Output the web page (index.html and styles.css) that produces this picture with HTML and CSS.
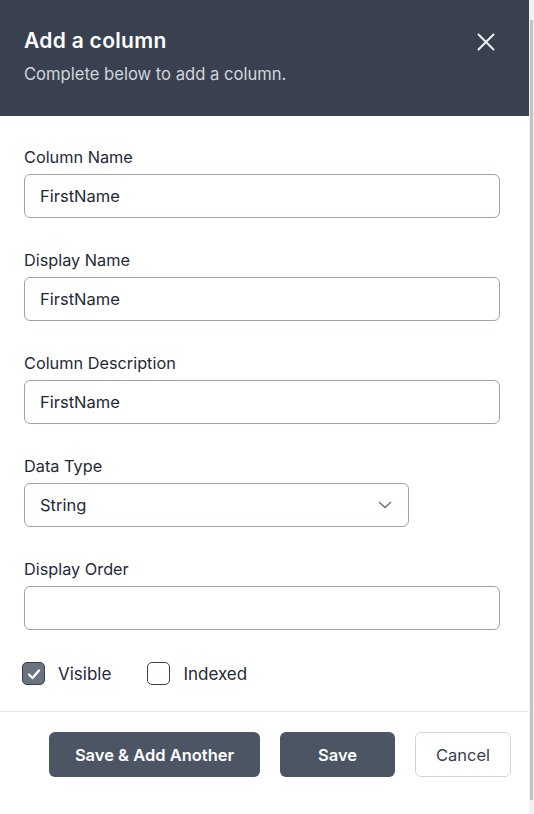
FILE: index.html
```html
<!DOCTYPE html>
<html lang="en">
<head>
<meta charset="utf-8">
<title>Add a column</title>
<link rel="stylesheet" href="styles.css">
</head>
<body>
<div class="shell">
  <div class="panel">
    <header class="head">
      <div class="head-text">
        <h1 class="title">Add a column</h1>
        <p class="subtitle">Complete below to add a column.</p>
      </div>
      <button class="close" aria-label="Close">
        <svg width="18" height="18" viewBox="0 0 18 18"><path d="M1.5 1.5 L16.5 16.5 M16.5 1.5 L1.5 16.5" stroke="#eef0f3" stroke-width="2" stroke-linecap="round" fill="none"/></svg>
      </button>
    </header>
    <form class="form">
      <div class="field">
        <label class="label">Column Name</label>
        <div class="input">FirstName</div>
      </div>
      <div class="field">
        <label class="label">Display Name</label>
        <div class="input">FirstName</div>
      </div>
      <div class="field">
        <label class="label">Column Description</label>
        <div class="input">FirstName</div>
      </div>
      <div class="field">
        <label class="label">Data Type</label>
        <div class="input select">
          <span>String</span>
          <svg class="chev" width="14" height="8" viewBox="0 0 14 8"><path d="M1.5 1.5 L7 6.5 L12.5 1.5" stroke="#6b7280" stroke-width="1.6" fill="none" stroke-linecap="round" stroke-linejoin="round"/></svg>
        </div>
      </div>
      <div class="field">
        <label class="label">Display Order</label>
        <div class="input"></div>
      </div>
      <div class="checks">
        <div class="check">
          <span class="box checked">
            <svg width="14" height="12" viewBox="0 0 14 12"><path d="M2 6.5 L5.5 10 L12 2.5" stroke="#fff" stroke-width="2.4" fill="none" stroke-linecap="round" stroke-linejoin="round"/></svg>
          </span>
          <span class="check-label">Visible</span>
        </div>
        <div class="check">
          <span class="box"></span>
          <span class="check-label">Indexed</span>
        </div>
      </div>
    </form>
    <footer class="foot">
      <button class="btn primary wide">Save &amp; Add Another</button>
      <button class="btn primary save">Save</button>
      <button class="btn secondary">Cancel</button>
    </footer>
  </div>
  <div class="scrollbar"><div class="thumb"></div></div>
</div>
</body>
</html>
```
FILE: styles.css
```css
* { box-sizing: border-box; }
html, body { margin: 0; padding: 0; }
body {
  font-family: Inter, "Noto Sans", sans-serif;
  background: #fff;
  color: #1f2937;
}
.shell {
  display: flex;
  width: 534px;
  height: 814px;
}
.panel {
  width: 529px;
  display: flex;
  flex-direction: column;
}
.scrollbar {
  width: 5px;
  background: #f1f1f1;
  padding: 20px 1px 14px 1px;
  display: flex;
}
.thumb {
  flex: 1;
  background: #c3c3c3;
}
.head {
  height: 116px;
  background: #394151;
  display: flex;
  justify-content: space-between;
  align-items: flex-start;
  padding: 27px 34px 0 24px;
}
.title {
  margin: 0;
  font-size: 21px;
  line-height: 28px;
  font-weight: 600;
  letter-spacing: 0.3px;
  color: #fff;
}
.subtitle {
  margin: 9px 0 0;
  font-size: 16.6px;
  line-height: 20px;
  color: #d1d5db;
}
.close {
  background: none;
  border: 0;
  padding: 0;
  margin-top: 6px;
  width: 18px;
  height: 18px;
  display: flex;
}
.form {
  padding: 31px 29px 0 24px;
  display: flex;
  flex-direction: column;
}
.field {
  display: flex;
  flex-direction: column;
  margin-bottom: 32px;
}
.label {
  font-size: 16.3px;
  line-height: 20px;
  margin-bottom: 7px;
  color: #1f2937;
}
.input {
  height: 44px;
  border: 1px solid #9ca3af;
  border-radius: 6px;
  padding: 0 15px;
  display: flex;
  align-items: center;
  font-size: 16.5px;
  color: #1f2937;
}
.select {
  width: 385px;
  justify-content: space-between;
}
.chev { margin-right: 1px; }
.checks {
  display: flex;
  align-items: center;
  gap: 36px;
  margin: 0 0 0 -2px;
  height: 23px;
}
.check {
  display: flex;
  align-items: center;
  gap: 13px;
}
.box {
  width: 23px;
  height: 23px;
  border: 1.5px solid #374151;
  border-radius: 5px;
  display: flex;
  align-items: center;
  justify-content: center;
  background: #fff;
}
.box.checked { background: #6b7280; }
.check-label {
  font-size: 17px;
  color: #1f2937;
}
.foot {
  margin-top: 26px;
  border-top: 1px solid #e5e7eb;
  padding: 20px 18px 0 24px;
  display: flex;
  justify-content: flex-end;
  gap: 20px;
}
.btn {
  height: 45px;
  border-radius: 6px;
  font-family: Inter, "Noto Sans", sans-serif;
  font-size: 16.5px;
  display: flex;
  align-items: center;
  justify-content: center;
  padding: 0;
}
.primary {
  background: #4b5563;
  border: 0;
  color: #fff;
  font-weight: 600;
}
.wide { width: 211px; }
.save { width: 115px; }
.secondary {
  width: 96px;
  background: #fff;
  border: 1px solid #d1d5db;
  color: #374151;
}
```
